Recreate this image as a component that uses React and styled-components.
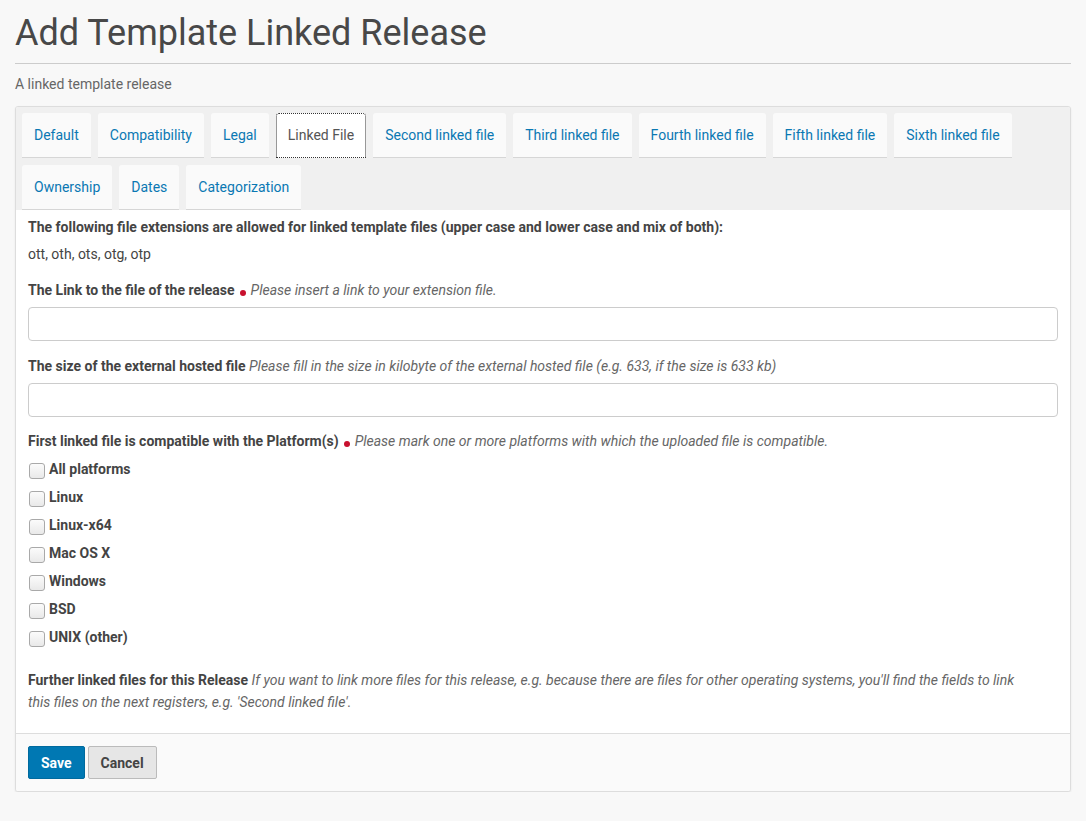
import React from 'react';
import styled, { createGlobalStyle } from 'styled-components';

const Global = createGlobalStyle`
  html, body {
    margin: 0;
    padding: 0;
    background: #f8f8f8;
    font-family: Roboto, "Liberation Sans", Arial, sans-serif;
    font-size: 14px;
    color: #444;
  }
  * { box-sizing: border-box; }
`

const Page = styled.div`
  padding: 0 15px;
`
const Title = styled.h1`
  margin: 0;
  padding: 12px 0 8px 0;
  font-size: 36px;
  line-height: 43px;
  font-weight: 400;
  color: #484848;
  border-bottom: 1px solid #ccc;
`
const Subtitle = styled.p`
  margin: 10px 0 0 0;
  line-height: 20px;
  color: #666;
`
const Panel = styled.div`
  margin-top: 12px;
  background: #fff;
  border: 1px solid #ddd;
  border-radius: 3px;
  box-shadow: 0 1px 2px rgba(0,0,0,0.08);
  overflow: hidden;
`
const TabBar = styled.ul`
  list-style: none;
  margin: 0;
  padding: 6px 6px 0 6px;
  display: flex;
  flex-wrap: wrap;
  gap: 7px 7px;
  background: #f0f0f0;
`
const Tab = styled.li`
  height: 45px;
  padding: 0 12px;
  line-height: 44px;
  border-radius: 3px 3px 0 0;
  background: ${p => (p.$active ? '#fff' : '#fafafa')};
  border-bottom: 1px solid ${p => (p.$active ? 'transparent' : '#d6d6d6')};
  outline: ${p => (p.$active ? '1px dotted #333' : 'none')};
  outline-offset: -1px;
  color: ${p => (p.$active ? '#555' : '#0a78b3')};
  cursor: pointer;
  white-space: nowrap;
`
const Content = styled.div`
  padding: 7px 12px 20px 12px;
`
const Strong = styled.div`
  font-weight: 700;
  line-height: 20px;
`
const Plain = styled.div`
  margin-top: 7px;
  line-height: 20px;
`
const Label = styled.div`
  margin-top: ${p => p.$top || 16}px;
  line-height: 20px;
  font-weight: 700;
`
const Hint = styled.span`
  font-weight: 400;
  font-style: italic;
  color: #666;
`
const Required = styled.span`
  display: inline-block;
  width: 6px;
  height: 6px;
  margin: 0 5px 0 5px;
  border-radius: 50%;
  background: #c8102e;
  vertical-align: -1px;
`
const TextInput = styled.input`
  display: block;
  width: 100%;
  height: 34px;
  margin-top: 7px;
  border: 1px solid #ccc;
  border-radius: 4px;
  background: #fff;
  font: inherit;
  padding: 0 8px;
`
const CheckList = styled.div`
  margin-top: 4px;
`
const CheckRow = styled.label`
  display: flex;
  align-items: center;
  height: 28px;
  font-weight: 700;
`
const Check = styled.input`
  appearance: none;
  width: 16px;
  height: 16px;
  margin: 4px 4px 0 1px;
  border: 1px solid #a9a9a9;
  border-radius: 3px;
  background: linear-gradient(#fbfbfb, #e9e9e9);
`
const Note = styled.div`
  margin-top: 18px;
  line-height: 22px;
  max-width: 990px;
  font-weight: 700;
`
const Footer = styled.div`
  padding: 12px;
  background: #fafafa;
  border-top: 1px solid #ddd;
  display: flex;
  gap: 3px;
`
const Button = styled.button`
  height: 33px;
  padding: 0 12px;
  font-family: inherit;
  font-size: 14px;
  font-weight: 700;
  border-radius: 2px;
  border: 1px solid ${p => (p.$primary ? '#006a9e' : '#bbb')};
  background: ${p => (p.$primary ? '#0078b3' : '#e6e6e6')};
  color: ${p => (p.$primary ? '#fff' : '#444')};
  cursor: pointer;
`

const tabs = [
  'Default', 'Compatibility', 'Legal', 'Linked File', 'Second linked file',
  'Third linked file', 'Fourth linked file', 'Fifth linked file', 'Sixth linked file',
  'Ownership', 'Dates', 'Categorization',
];
const platforms = ['All platforms', 'Linux', 'Linux-x64', 'Mac OS X', 'Windows', 'BSD', 'UNIX (other)'];

export default function App() {
  return (
    <Page>
      <Global />
      <Title>Add Template Linked Release</Title>
      <Subtitle>A linked template release</Subtitle>
      <Panel>
        <TabBar>
          {tabs.map(t => (
            <Tab key={t} $active={t === 'Linked File'}>{t}</Tab>
          ))}
        </TabBar>
        <Content>
          <Strong>The following file extensions are allowed for linked template files (upper case and lower case and mix of both):</Strong>
          <Plain>ott, oth, ots, otg, otp</Plain>
          <Label>
            The Link to the file of the release<Required /><Hint>Please insert a link to your extension file.</Hint>
          </Label>
          <TextInput type="text" />
          <Label $top={15}>
            The size of the external hosted file <Hint>Please fill in the size in kilobyte of the external hosted file (e.g. 633, if the size is 633 kb)</Hint>
          </Label>
          <TextInput type="text" />
          <Label $top={14}>
            First linked file is compatible with the Platform(s)<Required /><Hint>Please mark one or more platforms with which the uploaded file is compatible.</Hint>
          </Label>
          <CheckList>
            {platforms.map(p => (
              <CheckRow key={p}>
                <Check type="checkbox" />
                {p}
              </CheckRow>
            ))}
          </CheckList>
          <Note>
            Further linked files for this Release <Hint>If you want to link more files for this release, e.g. because there are files for other operating systems, you'll find the fields to link this files on the next registers, e.g. 'Second linked file'.</Hint>
          </Note>
        </Content>
        <Footer>
          <Button $primary>Save</Button>
          <Button>Cancel</Button>
        </Footer>
      </Panel>
    </Page>
  );
}
